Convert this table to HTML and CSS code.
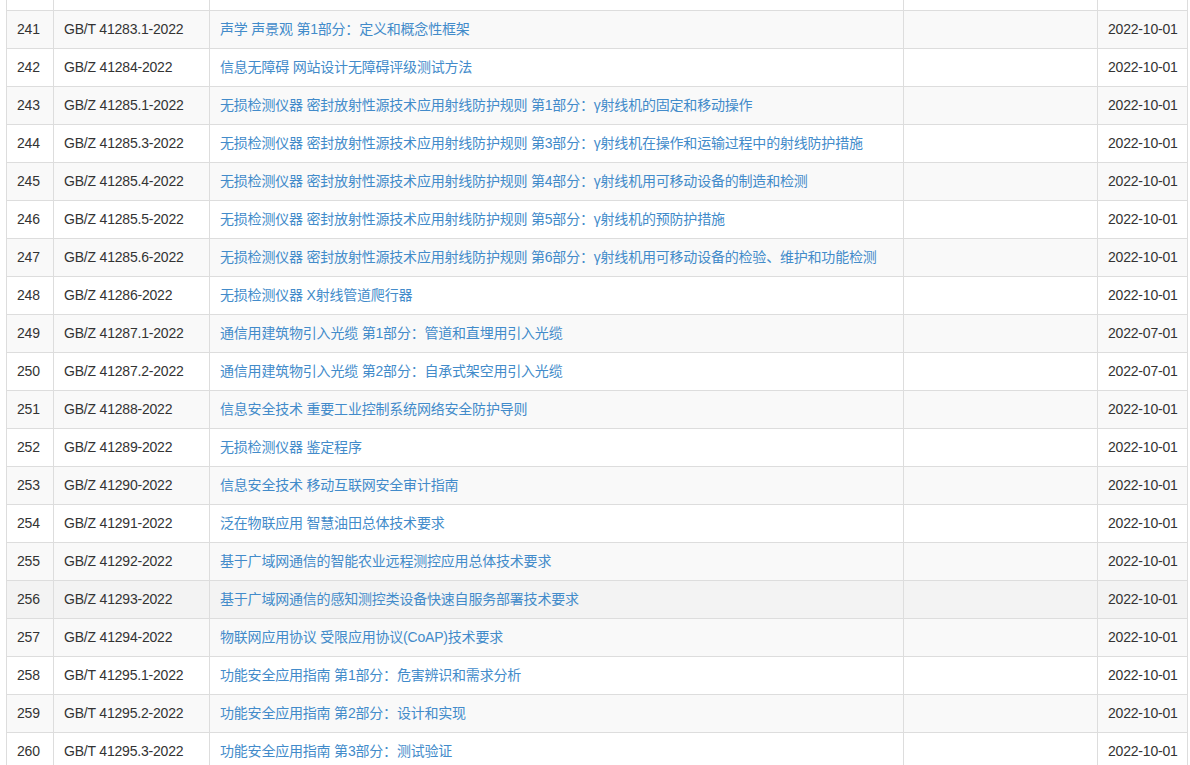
FILE: index.html
```html
<!DOCTYPE html>
<html lang="zh-CN">
<head>
<meta charset="utf-8">
<title>标准列表</title>
<link rel="stylesheet" href="styles.css">
</head>
<body>
<div class="wrap">
<table class="std-table">
<colgroup>
<col class="c-no"><col class="c-code"><col class="c-title"><col class="c-blank"><col class="c-date">
</colgroup>
<tbody>
<tr><td>&nbsp;</td><td></td><td></td><td></td><td></td></tr>
<tr><td>241</td><td>GB/T 41283.1-2022</td><td><a href="#">声学 声景观 第1部分：定义和概念性框架</a></td><td></td><td>2022-10-01</td></tr>
<tr><td>242</td><td>GB/Z 41284-2022</td><td><a href="#">信息无障碍 网站设计无障碍评级测试方法</a></td><td></td><td>2022-10-01</td></tr>
<tr><td>243</td><td>GB/Z 41285.1-2022</td><td><a href="#">无损检测仪器 密封放射性源技术应用射线防护规则 第1部分：γ射线机的固定和移动操作</a></td><td></td><td>2022-10-01</td></tr>
<tr><td>244</td><td>GB/Z 41285.3-2022</td><td><a href="#">无损检测仪器 密封放射性源技术应用射线防护规则 第3部分：γ射线机在操作和运输过程中的射线防护措施</a></td><td></td><td>2022-10-01</td></tr>
<tr><td>245</td><td>GB/Z 41285.4-2022</td><td><a href="#">无损检测仪器 密封放射性源技术应用射线防护规则 第4部分：γ射线机用可移动设备的制造和检测</a></td><td></td><td>2022-10-01</td></tr>
<tr><td>246</td><td>GB/Z 41285.5-2022</td><td><a href="#">无损检测仪器 密封放射性源技术应用射线防护规则 第5部分：γ射线机的预防护措施</a></td><td></td><td>2022-10-01</td></tr>
<tr><td>247</td><td>GB/Z 41285.6-2022</td><td><a href="#">无损检测仪器 密封放射性源技术应用射线防护规则 第6部分：γ射线机用可移动设备的检验、维护和功能检测</a></td><td></td><td>2022-10-01</td></tr>
<tr><td>248</td><td>GB/Z 41286-2022</td><td><a href="#">无损检测仪器 X射线管道爬行器</a></td><td></td><td>2022-10-01</td></tr>
<tr><td>249</td><td>GB/Z 41287.1-2022</td><td><a href="#">通信用建筑物引入光缆 第1部分：管道和直埋用引入光缆</a></td><td></td><td>2022-07-01</td></tr>
<tr><td>250</td><td>GB/Z 41287.2-2022</td><td><a href="#">通信用建筑物引入光缆 第2部分：自承式架空用引入光缆</a></td><td></td><td>2022-07-01</td></tr>
<tr><td>251</td><td>GB/Z 41288-2022</td><td><a href="#">信息安全技术 重要工业控制系统网络安全防护导则</a></td><td></td><td>2022-10-01</td></tr>
<tr><td>252</td><td>GB/Z 41289-2022</td><td><a href="#">无损检测仪器 鉴定程序</a></td><td></td><td>2022-10-01</td></tr>
<tr><td>253</td><td>GB/Z 41290-2022</td><td><a href="#">信息安全技术 移动互联网安全审计指南</a></td><td></td><td>2022-10-01</td></tr>
<tr><td>254</td><td>GB/Z 41291-2022</td><td><a href="#">泛在物联应用 智慧油田总体技术要求</a></td><td></td><td>2022-10-01</td></tr>
<tr><td>255</td><td>GB/Z 41292-2022</td><td><a href="#">基于广域网通信的智能农业远程测控应用总体技术要求</a></td><td></td><td>2022-10-01</td></tr>
<tr class="hover"><td>256</td><td>GB/Z 41293-2022</td><td><a href="#">基于广域网通信的感知测控类设备快速自服务部署技术要求</a></td><td></td><td>2022-10-01</td></tr>
<tr><td>257</td><td>GB/Z 41294-2022</td><td><a href="#">物联网应用协议 受限应用协议(CoAP)技术要求</a></td><td></td><td>2022-10-01</td></tr>
<tr><td>258</td><td>GB/T 41295.1-2022</td><td><a href="#">功能安全应用指南 第1部分：危害辨识和需求分析</a></td><td></td><td>2022-10-01</td></tr>
<tr><td>259</td><td>GB/T 41295.2-2022</td><td><a href="#">功能安全应用指南 第2部分：设计和实现</a></td><td></td><td>2022-10-01</td></tr>
<tr><td>260</td><td>GB/T 41295.3-2022</td><td><a href="#">功能安全应用指南 第3部分：测试验证</a></td><td></td><td>2022-10-01</td></tr>
</tbody>
</table>
</div>
</body>
</html>
```
FILE: styles.css
```css
html, body {
  margin: 0;
  padding: 0;
  background: #fff;
}
body {
  font-family: "Liberation Sans", Arial, "Noto Sans CJK SC", sans-serif;
  font-size: 14px;
  color: #333;
  overflow: hidden;
}
.wrap {
  padding: 0 3px 0 6px;
}
.std-table {
  width: 1181px;
  margin-top: -28px;
  border-collapse: collapse;
  table-layout: fixed;
  letter-spacing: -0.2px;
}
.c-no { width: 47px; }
.c-code { width: 156px; }
.c-title { width: 694px; }
.c-blank { width: 194px; }
.c-date { width: 90px; }
.std-table td {
  border: 1px solid #ddd;
  padding: 8px 10px 8px 10px;
  line-height: 21px;
  white-space: nowrap;
  overflow: hidden;
  vertical-align: top;
}
.std-table tr:nth-child(odd) td {
  background: #fff;
}
.std-table tr:nth-child(even) td {
  background: #f9f9f9;
}
.std-table tr.hover td {
  background: #f3f3f3;
}
.std-table a {
  color: #428bca;
  text-decoration: none;
}
```
